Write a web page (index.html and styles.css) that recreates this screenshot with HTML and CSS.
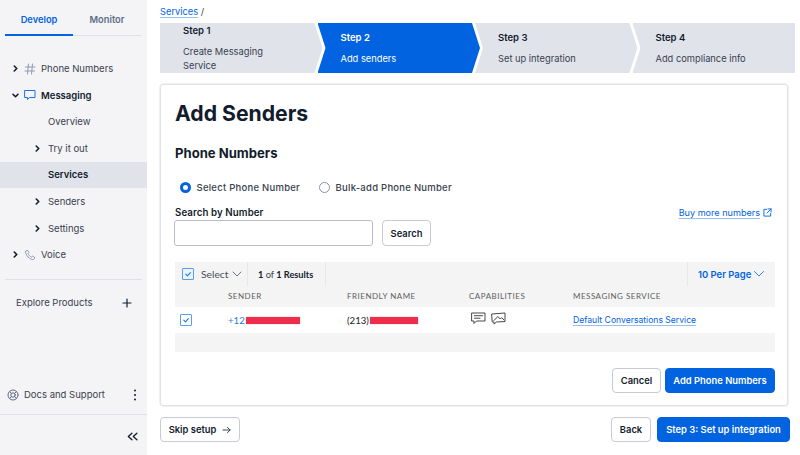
FILE: index.html
```html
<!DOCTYPE html>
<html lang="en">
<head>
<meta charset="utf-8">
<title>Add Senders</title>
<link rel="stylesheet" href="styles.css">
</head>
<body>
<div class="app">
  <aside class="sidebar">
    <div class="tabs">
      <div class="tab tab-active">Develop</div>
      <div class="tab">Monitor</div>
    </div>
    <nav class="nav">
      <div class="row">
        <svg class="caret" viewBox="0 0 6 8"><path d="M1.5 1 L4.5 4 L1.5 7"/></svg>
        <svg class="ico" viewBox="0 0 12 12"><path d="M4.5 1 L3.5 11 M8.5 1 L7.5 11 M1.5 4 H11 M1 8 H10.5"/></svg>
        <span>Phone Numbers</span>
      </div>
      <div class="row row-strong">
        <svg class="caret" viewBox="0 0 8 6"><path d="M1 1.5 L4 4.5 L7 1.5"/></svg>
        <svg class="ico ico-blue" viewBox="0 0 12 12"><path d="M1 1.5 H11 V8.5 H5.5 L3.5 10.5 V8.5 H1 Z"/></svg>
        <span>Messaging</span>
      </div>
      <div class="row row-sub"><span>Overview</span></div>
      <div class="row row-sub-c">
        <svg class="caret" viewBox="0 0 6 8"><path d="M1.5 1 L4.5 4 L1.5 7"/></svg>
        <span>Try it out</span>
      </div>
      <div class="row row-sub row-selected"><span>Services</span></div>
      <div class="row row-sub-c">
        <svg class="caret" viewBox="0 0 6 8"><path d="M1.5 1 L4.5 4 L1.5 7"/></svg>
        <span>Senders</span>
      </div>
      <div class="row row-sub-c">
        <svg class="caret" viewBox="0 0 6 8"><path d="M1.5 1 L4.5 4 L1.5 7"/></svg>
        <span>Settings</span>
      </div>
      <div class="row">
        <svg class="caret" viewBox="0 0 6 8"><path d="M1.5 1 L4.5 4 L1.5 7"/></svg>
        <svg class="ico" viewBox="0 0 12 12"><path d="M1.5 2.5 L3 1 L5 3.2 L4 4.6 C4.6 6 6 7.4 7.4 8 L8.8 7 L11 9 L9.5 10.5 C6 11 1 6 1.5 2.5 Z"/></svg>
        <span>Voice</span>
      </div>
    </nav>
    <div class="rule"></div>
    <div class="explore">
      <span>Explore Products</span>
      <svg class="plus" viewBox="0 0 10 10"><path d="M5 1 V9 M1 5 H9"/></svg>
    </div>
    <div class="docs">
      <svg class="ico-docs" viewBox="0 0 12 12"><circle cx="6" cy="6" r="5"/><circle cx="6" cy="6" r="2.2"/><path d="M2.5 2.5 L4.4 4.4 M9.5 2.5 L7.6 4.4 M2.5 9.5 L4.4 7.6 M9.5 9.5 L7.6 7.6"/></svg>
      <span>Docs and Support</span>
      <svg class="dots" viewBox="0 0 4 12"><circle cx="2" cy="1.5" r="1"/><circle cx="2" cy="6" r="1"/><circle cx="2" cy="10.5" r="1"/></svg>
    </div>
    <div class="collapse">
      <svg class="chev2" viewBox="0 0 10 8"><path d="M4.5 1 L1.2 4 L4.5 7 M9 1 L5.7 4 L9 7"/></svg>
    </div>
  </aside>

  <main class="main">
    <div class="crumb"><a class="link">Services</a> /</div>
    <div class="stepper">
      <div class="step step-first"><b>Step 1</b><span>Create Messaging Service</span></div>
      <div class="step step-current"><b>Step 2</b><span>Add senders</span></div>
      <div class="step"><b>Step 3</b><span>Set up integration</span></div>
      <div class="step step-last"><b>Step 4</b><span>Add compliance info</span></div>
    </div>

    <section class="card">
      <h1>Add Senders</h1>
      <h2>Phone Numbers</h2>
      <div class="radios">
        <label class="radio"><i class="dot dot-on"></i>Select Phone Number</label>
        <label class="radio"><i class="dot"></i>Bulk-add Phone Number</label>
      </div>
      <div class="label-row">
        <span class="field-label">Search by Number</span>
        <a class="buy"><span class="buy-text">Buy more numbers</span>
          <svg class="ext" viewBox="0 0 10 10"><path d="M4 1.5 H1 V9 H8.5 V6 M5.5 1 H9 V4.5 M9 1 L4.5 5.5"/></svg>
        </a>
      </div>
      <div class="search">
        <div class="input"></div>
        <div class="btn btn-search">Search</div>
      </div>

      <div class="table">
        <div class="toolbar">
          <div class="tool tool-select">
            <i class="check check-tool"><svg viewBox="0 0 10 10"><path d="M2.8 5.2 L4.4 6.8 L7.4 3.6"/></svg></i>
            <span>Select</span>
            <svg class="chev" viewBox="0 0 10 6"><path d="M1 1 L5 5 L9 1"/></svg>
          </div>
          <div class="tool tool-count"><b>1</b> of <b>1 Results</b></div>
          <div class="tool tool-page">
            <span>10 Per Page</span>
            <svg class="chev chev-blue" viewBox="0 0 10 6"><path d="M0.5 0.5 L5 5 L9.5 0.5"/></svg>
          </div>
        </div>
        <div class="grid grid-head">
          <span></span><span>SENDER</span><span>FRIENDLY NAME</span><span>CAPABILITIES</span><span>MESSAGING SERVICE</span>
        </div>
        <div class="grid grid-row">
          <span class="cell-check"><i class="check"><svg viewBox="0 0 10 10"><path d="M2.8 5.2 L4.4 6.8 L7.4 3.6"/></svg></i></span>
          <span class="num num-link">+12<i class="redact redact-a"></i></span>
          <span class="num">(213)<i class="redact redact-b"></i></span>
          <span class="caps">
            <svg viewBox="0 0 15 13"><path d="M1 1 H14 V9 H5.5 L3 11.5 V9 H1 Z M3.5 3.7 H11.5 M3.5 6.2 H9"/></svg>
            <svg viewBox="0 0 15 13"><path d="M1 2 L14 1 V9.5 L5.5 10 L3 12 V10 H1.6 Z M3 8.5 L6.8 4.5 L9.2 7 L10.6 5.6 L13 8"/></svg>
          </span>
          <a class="service">Default Conversations Service</a>
        </div>
        <div class="table-foot"></div>
      </div>

      <div class="actions">
        <div class="btn btn-cancel">Cancel</div>
        <div class="btn btn-primary btn-add">Add Phone Numbers</div>
      </div>
    </section>

    <footer class="foot">
      <div class="btn btn-skip">Skip setup
        <svg class="arrow" viewBox="0 0 10 8"><path d="M1 4 H9 M6 1 L9 4 L6 7"/></svg>
      </div>
      <div class="foot-right">
        <div class="btn btn-back">Back</div>
        <div class="btn btn-primary btn-next">Step 3: Set up integration</div>
      </div>
    </footer>
  </main>
</div>
</body>
</html>
```
FILE: styles.css
```css
* { box-sizing: border-box; }
html, body { margin: 0; padding: 0; height: 100%; overflow: hidden; background: #fff; }
body { font-family: Inter, "Liberation Sans", sans-serif; font-size: 9.5px; color: #121c2d; }
i { font-style: normal; display: block; }
svg { display: block; fill: none; stroke-linecap: round; stroke-linejoin: round; }
.app { display: flex; width: 800px; height: 455px; }

/* Sidebar */
.sidebar { width: 147px; flex: none; height: 100%; background: #f4f4f6; display: flex; flex-direction: column; color: #39414f; }
.tabs { display: flex; height: 36px; margin: 0 5px 0 5px; }
.tab { height: 36px; padding-top: 13px; line-height: 14px; width: 68px; text-align: center; font-weight: 600; font-size: 9.3px; color: #606b85; border-bottom: 1px solid #dfe1e8; }
.tab-active { color: #0263e0; border-bottom: 1px solid #0263e0; box-shadow: inset 0 -1px 0 #0263e0; }
.nav { margin-top: 19.3px; }
.row { height: 26.6px; display: flex; align-items: center; font-size: 9.5px; padding-left: 12px; }
.caret { width: 5px; height: 7px; stroke: #121c2d; stroke-width: 1.9; margin: 0 6px 0 1px; flex: none; }
.row-strong .caret { width: 7px; height: 5px; margin: 0 5px 0 0; }
.ico { width: 12px; height: 12px; stroke: #8891aa; stroke-width: .9; margin-right: 5px; flex: none; }
.ico-blue { stroke: #0263e0; }
.row-strong { font-weight: 600; color: #121c2d; }
.row-sub { padding-left: 48px; }
.row-sub-c { padding-left: 34px; }
.row-sub-c .caret { margin-right: 8px; }
.row-selected { background: #e1e3ea; font-weight: 600; color: #121c2d; }
.rule { height: 1px; background: #dfe1e8; margin: 10.7px 5px 0; flex: none; }
.explore { display: flex; justify-content: space-between; align-items: center; height: 14px; margin-top: 16px; padding: 0 16px; font-size: 9.5px; }
.plus { width: 10px; height: 10px; stroke: #121c2d; stroke-width: 1.2; margin-right: -1px; }
.docs { display: flex; align-items: center; height: 14px; margin-top: 78px; padding-left: 6.5px; font-size: 9.5px; }
.ico-docs { width: 12px; height: 12px; stroke: #606b85; stroke-width: 1; margin-right: 5.5px; }
.dots { width: 4px; height: 12px; margin-left: auto; margin-right: 10px; fill: #121c2d; }
.dots circle { stroke: none; }
.collapse { border-top: 1px solid #dfe1e8; margin-top: 12px; flex: 1; display: flex; justify-content: flex-end; padding: 17px 9px 0 0; }
.chev2 { width: 11px; height: 9px; stroke: #121c2d; stroke-width: 1.2; }

/* Main */
.main { flex: 1; min-width: 0; padding: 5px 5px 0 13px; display: flex; flex-direction: column; }
.crumb { height: 13px; line-height: 13px; font-size: 9.3px; color: #39414f; }
.link { color: #0263e0; text-decoration: underline; text-decoration-color: #99c0f2; text-underline-offset: 1.5px; }
.stepper { display: flex; height: 50px; margin-top: 5px; flex: none; }
.step { flex: 1 1 0; min-width: 0; height: 50px; margin-left: -5px; padding: 8px 8px 0 23px; background: #e1e3ea; font-size: 9.3px; line-height: 14px; color: #39414f;
  clip-path: polygon(0 0, calc(100% - 8px) 0, 100% 50%, calc(100% - 8px) 100%, 0 100%, 8px 50%); }
.step b { display: block; font-size: 9.5px; font-weight: 600; color: #121c2d; height: 21px; }
.step span { display: block; }
.step-first { margin-left: 0; padding-top: 1px; clip-path: polygon(0 0, calc(100% - 8px) 0, 100% 50%, calc(100% - 8px) 100%, 0 100%); }
.step-first b { height: 21px; }
.step-first span { line-height: 13.5px; max-width: 95px; }
.step-last { clip-path: polygon(0 0, 100% 0, 100% 100%, 0 100%, 8px 50%); }
.step-current { background: #0263e0; color: #fff; }
.step-current b { color: #fff; }

/* Card */
.card { margin: 11px 7px 0 0; height: 322px; flex: none; border: 1px solid #e1e3ea; border-radius: 3px; padding: 13px 13px 12px 14px; box-shadow: 0 0 0 .5px #e1e3ea; }
h1 { margin: 0; font-size: 21.2px; line-height: 30px; font-weight: 700; color: #121c2d; }
h2 { margin: 15px 0 0; font-size: 13.1px; line-height: 20px; font-weight: 700; color: #121c2d; }
.radios { display: flex; margin: 16px 0 0 5px; height: 16px; }
.radio { display: flex; align-items: center; font-size: 9.5px; letter-spacing: .25px; color: #39414f; font-weight: 500; margin-right: 19px; }
.dot { width: 11px; height: 11px; border-radius: 50%; border: 1px solid #8891aa; background: #fff; margin-right: 5.5px; flex: none; }
.dot-on { border: 3px solid #0263e0; }
.label-row { display: flex; justify-content: space-between; align-items: center; height: 14px; margin-top: 10px; }
.field-label { font-size: 9.7px; font-weight: 600; color: #121c2d; letter-spacing: .1px; }
.buy { display: flex; align-items: center; margin-right: 2px; color: #0263e0; }
.buy-text { font-size: 9.1px; text-decoration: underline; text-decoration-color: #99c0f2; text-underline-offset: 1.5px; }
.ext { width: 9px; height: 9px; margin-left: 3px; stroke: #0263e0; stroke-width: 1; }
.search { display: flex; margin-top: 1px; height: 26px; }
.input { width: 199px; margin-left: -1px; height: 26px; border: 1px solid #b9bdcc; border-radius: 3px; }
.btn { display: flex; align-items: center; justify-content: center; border: 1px solid #c6cad6; border-radius: 4px; background: #fff; font-weight: 600; font-size: 9.4px; color: #121c2d; white-space: nowrap; }
.btn-search { width: 49px; margin-left: 9px; }
.btn-primary { background: #0263e0; border-color: #0263e0; color: #fff; }

/* Table */
.table { margin-top: 16px; width: 600px; font-family: Lato, "Liberation Sans", sans-serif; }
.toolbar { display: flex; height: 24px; background: #f4f4f4; align-items: stretch; }
.tool { display: flex; align-items: center; }
.tool-select { width: 73px; padding-left: 7px; border-right: 1px solid #e8e8e8; font-size: 10.3px; color: #4a4f5a; }
.tool-select span { margin-left: 7px; }
.tool-count { width: 78px; padding-left: 10px; border-right: 1px solid #e8e8e8; font-size: 9.2px; color: #39414f; white-space: pre; }
.tool-count b { font-weight: 700; color: #121c2d; }
.tool-page { margin-left: auto; width: 88px; padding-left: 10px; border-left: 1px solid #e8e8e8; font-family: Inter, sans-serif; font-weight: 600; font-size: 9.45px; color: #0263e0; }
.check { width: 12px; height: 12px; border: 1px solid #5c9dea; background: #fff; flex: none; border-radius: 1px; }
.check svg { width: 10px; height: 10px; stroke: #1f7ae0; stroke-width: 1.1; }
.check-tool { background: #eaf2fc; }
.chev { width: 10px; height: 6px; stroke: #4a4f5a; stroke-width: .8; margin-left: 4px; }
.chev-blue { width: 10px; stroke: #0263e0; margin-left: 3px; }
.grid { display: grid; grid-template-columns: 53px 119px 122px 104px 1fr; align-items: center; }
.grid-head { height: 21px; padding-bottom: 2px; background: #f4f4f4; font-size: 8px; letter-spacing: .5px; color: #606060; }
.grid-row { height: 26px; font-size: 9.6px; color: #222; }
.cell-check { padding-left: 5px; }
.num { display: flex; align-items: center; }
.num-link { color: #1f7ae0; }
.redact { height: 7px; background: #ed2d4a; margin-left: 1px; box-shadow: 0 0 1px rgba(237,45,74,.5); }
.redact-a { width: 54px; }
.redact-b { width: 48px; }
.caps { display: flex; gap: 5px; padding-left: 2px; }
.caps svg { width: 15px; height: 13px; stroke: #333; stroke-width: .9; margin-top: -3px; }
.service { font-family: Inter, sans-serif; font-size: 8.6px; color: #0263e0; text-decoration: underline; text-decoration-color: #99c0f2; text-underline-offset: 1.5px; }
.table-foot { height: 19px; background: #f4f4f4; }
.actions { display: flex; justify-content: flex-end; gap: 4px; margin-top: 16px; height: 25px; width: 600px; }
.btn-cancel { width: 49px; }
.btn-add { width: 110px; }

/* Footer */
.foot { display: flex; justify-content: space-between; margin: 11px 5px 0 0; height: 25px; }
.btn-skip { width: 80px; gap: 6px; }
.arrow { width: 9px; height: 8px; stroke: #121c2d; stroke-width: .9; }
.foot-right { display: flex; gap: 6px; }
.btn-back { width: 40px; }
.btn-next { width: 133px; }
```
